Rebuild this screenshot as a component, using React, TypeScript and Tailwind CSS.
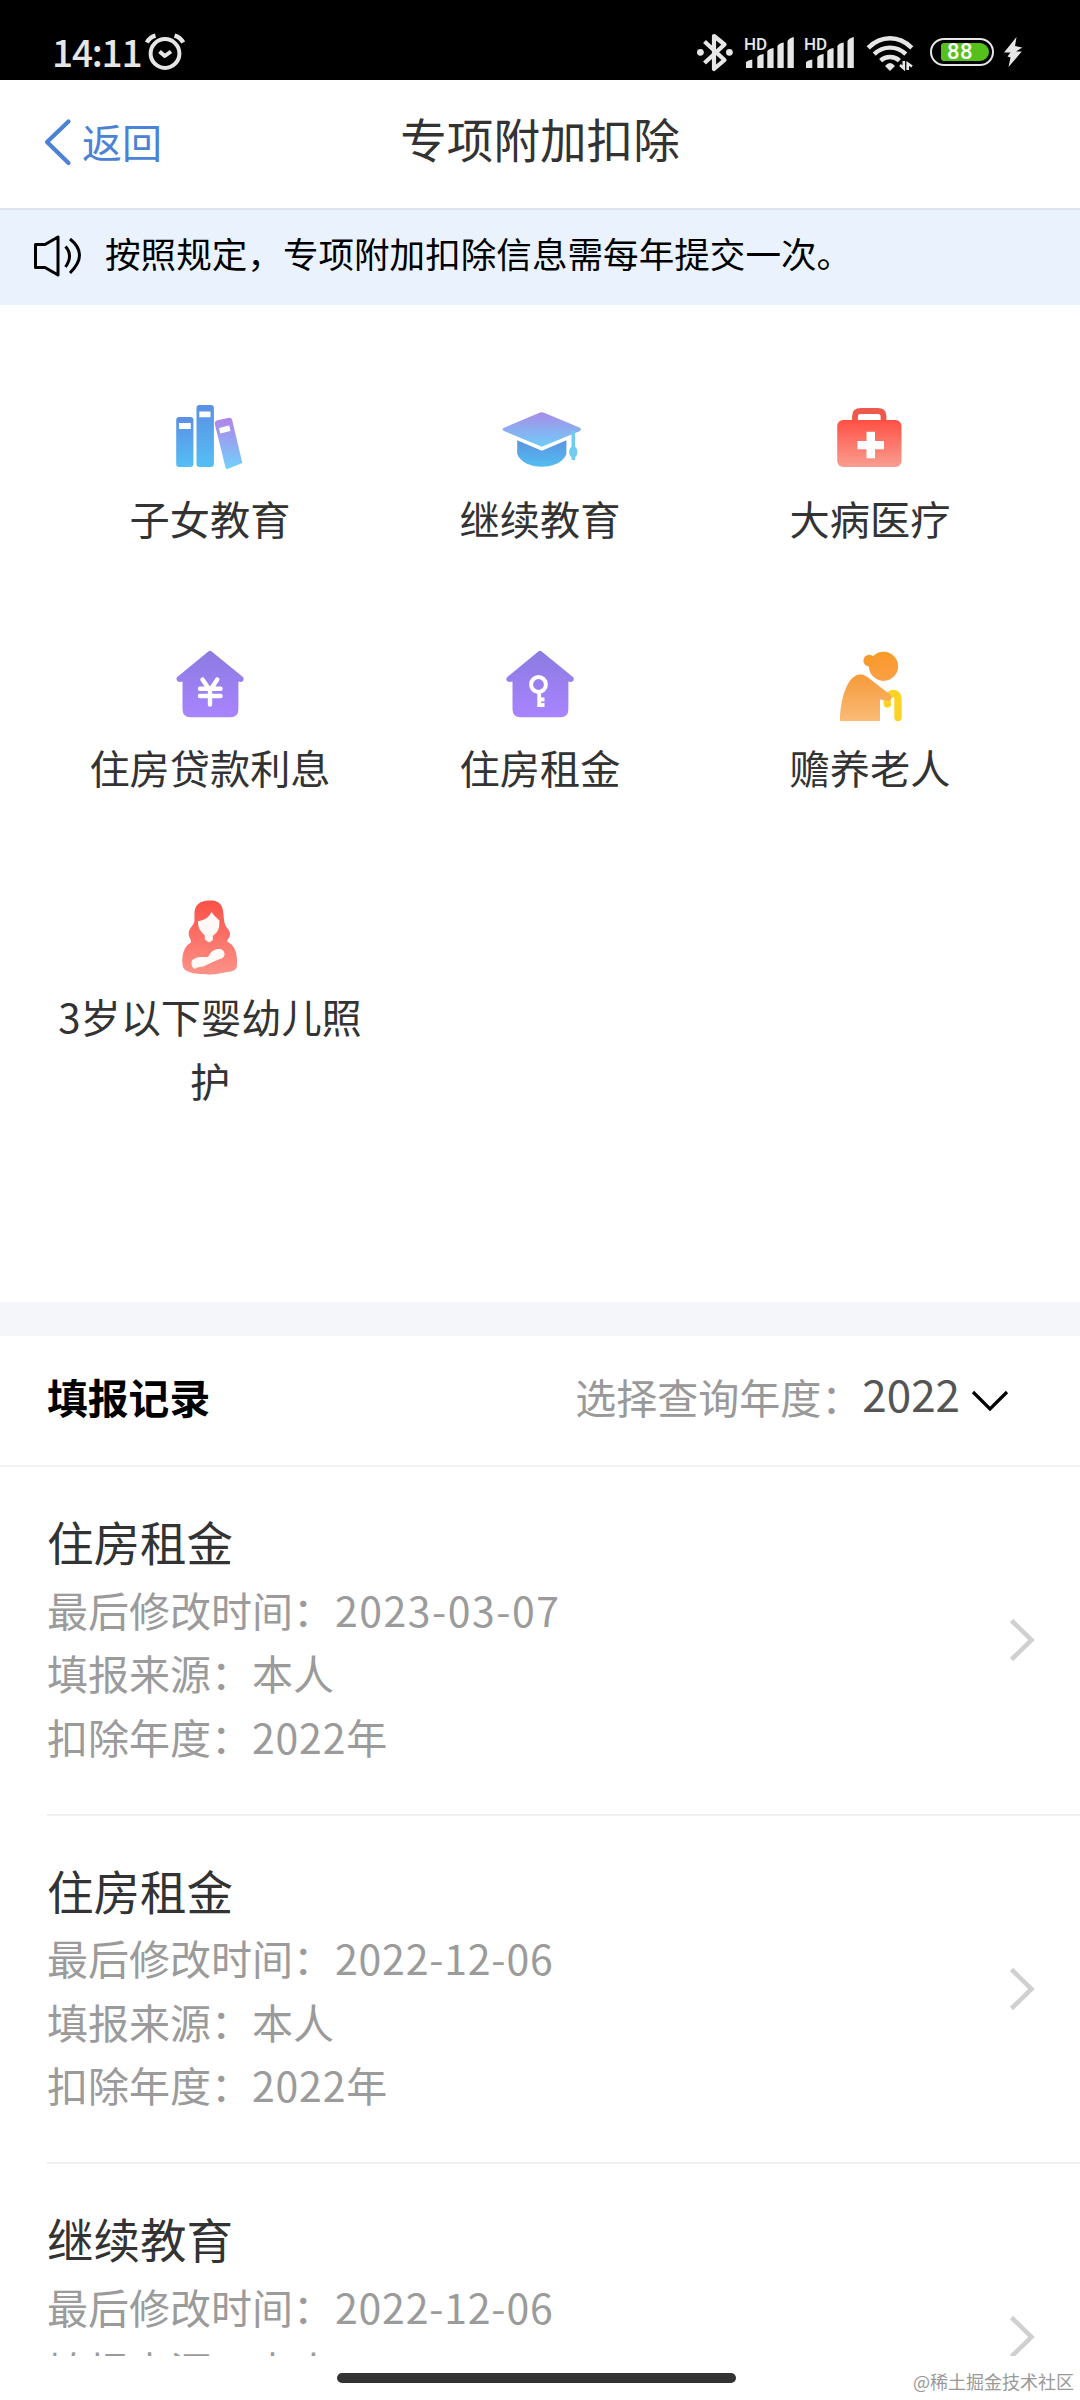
import type { ReactNode } from 'react';

const light = '#e6e6e6';

function AlarmIcon() {
  return (
    <svg className="ml-[7px] mt-[32px] h-[40px] w-[42px] shrink-0" viewBox="0 0 42 40" fill="none" stroke={light} strokeWidth="4">
      <circle cx="21" cy="21.5" r="14.4" />
      <path d="M2.8 10.5 Q6 5 11.5 3.6 M30.5 3.6 Q36 5 39.2 10.5" strokeWidth="4.4" />
      <path d="M15.5 19.5 L20.8 24 L27 19.5" strokeLinejoin="round" />
    </svg>
  );
}

function BluetoothIcon() {
  return (
    <svg className="absolute left-[696px] top-[32px] h-[40px] w-[38px]" viewBox="0 0 38 40" fill="none" stroke={light} strokeWidth="4.2">
      <path d="M8.5 9.5 L28.5 28 L18 37 V4 L28.5 12.5 L8.5 31" strokeLinejoin="round" />
      <circle cx="4.4" cy="20.3" r="3.4" fill={light} stroke="none" />
      <circle cx="33.4" cy="20.3" r="3.4" fill={light} stroke="none" />
    </svg>
  );
}

function Signal({ className }: { className: string }) {
  return (
    <div className={className}>
      <span className="absolute left-0 top-[3px] font-['Roboto'] text-[17px] font-medium leading-[18px] text-[#e6e6e6]">HD</span>
      <svg className="h-[38px] w-[52px]" viewBox="0 0 52 38" fill={light}>
        <path d="M2 36 V30 Q4 28 8.3 27.5 V36Z M13.3 36 V25 Q15 22.5 19.6 22 V36Z M23.3 36 V19 Q25 16.5 29.6 16 V36Z M33.4 36 V14 Q35 11 39.7 10.5 V36Z M43.5 36 V9 Q45 6 49.8 5 V36Z" />
      </svg>
    </div>
  );
}

function WifiIcon() {
  return (
    <svg className="absolute left-[866px] top-[35px] h-[38px] w-[48px]" viewBox="0 0 48 38" fill="none" stroke={light} strokeWidth="4.4">
      <path d="M2.2 12.8 Q12 3.3 24 3.3 T45.8 12.8" />
      <path d="M8.2 19.2 Q15 12.6 24 12.6 T39.8 19.2" />
      <path d="M14.6 25.6 Q18.5 22 24 22 T33.4 25.6" />
      <path d="M19 31 Q24 25 29 31 L24 36Z" fill={light} stroke="none" />
      <path d="M37.8 26 V33.4 L34 30 M41.7 35 V28.5 L46 31.5" strokeWidth="2.6" />
    </svg>
  );
}

function StatusBar() {
  return (
    <header className="relative flex h-[80px] shrink-0 bg-black">
      <span className="ml-[52px] mt-[27px] w-[85px] whitespace-nowrap font-['Noto_Sans_CJK_SC'] text-[37px] font-medium leading-[48px] tracking-[-1.2px] text-[#e6e6e6]">
        14:11
      </span>
      <AlarmIcon />
      <BluetoothIcon />
      <Signal className="absolute left-[744px] top-[32px]" />
      <Signal className="absolute left-[804px] top-[32px]" />
      <WifiIcon />
      <div className="absolute left-[930px] top-[38px] h-[28px] w-[64px] rounded-full border-2 border-[#e6e6e6]">
        <div className="absolute left-[9px] top-[3px] flex h-[18px] w-[48px] items-center rounded-l-[3px] rounded-r-[9px] bg-[#55c01b] pl-[6px] font-['Roboto'] text-[22px] font-medium leading-[18px] tracking-[0.6px] text-white">
          88
        </div>
      </div>
      <svg className="absolute left-[1003px] top-[36px] h-[32px] w-[20px]" viewBox="0 0 20 32" fill={light}>
        <path d="M13.5 1 L1 16.5 H7.5 L4.5 20.5 L7.5 21.5 L5.5 31 L18.8 15.5 H13 L19.3 11.5 L12 10Z" />
      </svg>
    </header>
  );
}

function TitleBar() {
  return (
    <div className="relative flex h-[130px] shrink-0 items-center justify-center border-b-2 border-[#dfe4ee]">
      <button className="absolute left-[43px] top-[35px] flex items-center text-[40px] leading-[52px] text-[#4b82d6]">
        <svg className="mt-[2px] h-[50px] w-[30px]" viewBox="0 0 30 50" fill="none" stroke="currentColor" strokeWidth="4.2" strokeLinecap="round">
          <path d="M25.5 4.5 L4 25 L25.5 46" strokeLinejoin="round" />
        </svg>
        <span className="ml-[9px]">返回</span>
      </button>
      <h1 className="-mt-[12px] text-[46.6px] leading-[60px]">专项附加扣除</h1>
    </div>
  );
}

function Notice() {
  return (
    <div className="flex h-[95px] shrink-0 items-center bg-[#eaf3fd] pl-[32px] text-black">
      <svg className="-mt-[3px] h-[44px] w-[52px]" viewBox="0 0 52 44" fill="none" stroke="#000" strokeWidth="3">
        <path d="M3.5 10.5 H13 L26 3 V41 L13 33.5 H3.5Z" strokeLinejoin="round" />
        <path d="M33.5 12.5 Q41.5 21.5 33.5 33 M38 5 Q57 20 38 39" />
      </svg>
      <p className="-mt-[9px] ml-[21px] text-[35.6px] leading-[48px]">按照规定，专项附加扣除信息需每年提交一次。</p>
    </div>
  );
}

function Gradient({ id, from, to }: { id: string; from: string; to: string }) {
  return (
    <linearGradient id={id} x1="0" y1="0" x2="0" y2="1">
      <stop offset="0" stopColor={from} />
      <stop offset="1" stopColor={to} />
    </linearGradient>
  );
}

function Books() {
  return (
    <>
      <Gradient id="book" from="#5c8fe4" to="#53bff5" />
      <Gradient id="lean" from="#b283ea" to="#70d0fa" />
      <rect x="8.2" y="21" width="17.2" height="50" rx="3" fill="url(#book)" />
      <rect x="28.5" y="9" width="17.4" height="62" rx="3" fill="url(#book)" />
      <path d="M49.5 24.3 L61 21.8 Q63.5 21.5 64.2 24 L74.3 67 L59.5 73 Q58 73 57.5 71.5 L46.8 28 Q46.6 25 49.5 24.3Z" fill="url(#lean)" />
      <path d="M11 27 H22.8 V33 H11Z M31.3 15.5 H42.5 V21.3 H31.3Z M51 32 L61.3 29.6 L62.5 35 L52.3 37.5Z" fill="#fff" />
    </>
  );
}

function Cap() {
  return (
    <>
      <Gradient id="board" from="#a88ce8" to="#6fcdf8" />
      <Gradient id="bowl" from="#5b93e0" to="#54bdf2" />
      <path d="M41.5 16.8 Q43.8 15.5 46 16.8 L81.5 31.5 Q84.5 33.3 81.5 35.2 L43.8 50.7 L6 35 Q3 33.3 6 31.7Z" fill="url(#board)" />
      <path d="M19.2 44.2 L43.8 54.8 L68.4 44.2 V58 C66 66 55 70.8 43.8 70.8 S22 66 19.2 58Z" fill="url(#bowl)" />
      <path d="M75.3 35 V64" stroke="#72ccf0" strokeWidth="3.6" />
      <ellipse cx="75.3" cy="56" rx="4.2" ry="5.8" fill="#72ccf0" />
    </>
  );
}

function Kit() {
  return (
    <>
      <Gradient id="kit" from="#ff5044" to="#f99d90" />
      <path d="M27 26 V20 Q27 15 33 15 H49.5 Q55.5 15 55.5 20 V26" fill="none" stroke="#ee594c" strokeWidth="5.8" />
      <rect x="9.2" y="24" width="64.3" height="47" rx="6" fill="url(#kit)" />
      <path d="M38.5 35.8 H47 V45 H56 V53.3 H47 V62.3 H38.5 V53.3 H29.5 V45 H38.5Z" fill="#fff" />
    </>
  );
}

function House({ id, children }: { id: string; children: ReactNode }) {
  return (
    <>
      <Gradient id={id} from="#8b7be0" to="#a984ff" />
      <path d="M40.3 6.6 Q42 5 43.7 6.6 L75.2 32.2 Q76.5 34.5 75 36 Q73.5 37.5 70.4 36.6 V64 Q70.4 72.3 62.5 72.3 H22.5 Q14.5 72.3 14.5 64 V36.6 Q11 37.5 9.2 36 Q7.5 34.5 9 32.2Z" fill={`url(#${id})`} />
      <g fill="none" stroke="#fff">{children}</g>
    </>
  );
}

function Elder() {
  return (
    <>
      <Gradient id="elder" from="#f59a3a" to="#fabb76" />
      <Gradient id="head" from="#f89a28" to="#fb9f45" />
      <path d="M59.4 59 C57 48 70 44 70 55 V72.5" fill="none" stroke="#fbd324" strokeWidth="7.4" strokeLinecap="round" />
      <path d="M12 76 C12 57 18 32 31 29.6 Q36 28.5 42 34 L62.5 50 Q65 53 61 56 L52 54.5 V76Z" fill="url(#elder)" />
      <circle cx="55.5" cy="21.3" r="14.6" fill="url(#head)" />
      <circle cx="41.3" cy="15.7" r="5.9" fill="#f79a2e" />
    </>
  );
}

function Mother() {
  return (
    <>
      <Gradient id="mother" from="#fb5047" to="#fb9389" />
      <path d="M42 6.6 C49 6.4 53 9 54.7 15 C56 22 55.5 27 57.5 31.5 C59.5 35 62.5 37 62 41 C61.5 44.5 58.5 46 59.5 48 C66 50.5 69 58 69 66 C69 73 69.5 76 63 77.5 C56 78.5 48 80.8 40.3 80.5 C33 80 25 80 20 77.5 C15 75.5 14.2 72 14.3 66 C14.5 58 17 52 22.7 48.7 C24 46 20.5 44 20.7 39.3 C21 34 25 32 26.3 27.7 C27 23 25.5 17 28 12.7 C31 8 36 6.6 42 6.6Z" fill="url(#mother)" />
      <path d="M43.5 17.5 C45 21 48.5 23.5 51.4 26.5 C51.5 32 51 36 48.5 38.5 L44.8 42 V46.2 L41 48.4 L36.8 45.5 V41.5 C32 37 30 34 30 27.3 C36 26.5 42 23 43.5 17.5Z" fill="#fffaf5" />
      <path d="M23.5 69 C23 64 31 62.5 36.5 63 C39 63.5 40.5 63 42 60 C44.5 55.5 52 53.5 55 56.5 C58 60 56.5 64 52 65 C45 67.5 40 70.5 35.5 72.5 C30 73 27.5 74 27 75 C24.5 74 23.5 72 23.5 69Z" fill="#fffaf5" />
    </>
  );
}

const categories: { label: string; icon: ReactNode }[] = [
  { label: '子女教育', icon: <Books /> },
  { label: '继续教育', icon: <Cap /> },
  { label: '大病医疗', icon: <Kit /> },
  {
    label: '住房贷款利息',
    icon: (
      <House id="loan">
        <path d="M34.5 34.5 L42 45.5 L49.3 34.5 M42 45 V59.5 M32 43.8 H52.5 M32 51 H52.5" strokeWidth="4.4" strokeLinecap="round" />
      </House>
    ),
  },
  {
    label: '住房租金',
    icon: (
      <House id="rent">
        <circle cx="40.5" cy="39.5" r="7.4" strokeWidth="4" />
        <path d="M41.2 47 V62 M41.2 54.5 H46.5 M41.2 60 H46.5" strokeWidth="3.8" />
      </House>
    ),
  },
  { label: '赡养老人', icon: <Elder /> },
  { label: '3岁以下婴幼儿照护', icon: <Mother /> },
];

const records = [
  { title: '住房租金', date: '2023-03-07', source: '本人', year: '2022' },
  { title: '住房租金', date: '2022-12-06', source: '本人', year: '2022' },
  { title: '继续教育', date: '2022-12-06', source: '本人' },
];

export default function App() {
  return (
    <div className="flex h-[2400px] w-[1080px] flex-col overflow-hidden bg-white font-['Noto_Sans_CJK_SC',sans-serif] text-[#333]">
      <StatusBar />
      <TitleBar />
      <Notice />

      <section className="grid h-[997px] shrink-0 auto-rows-[249px] grid-cols-3 px-[45px] pt-[91px]">
        {categories.map((c) => (
          <div key={c.label} className="flex flex-col items-center">
            <svg className="h-[84px] w-[84px]" viewBox="0 0 84 84">{c.icon}</svg>
            <p className="mt-[6px] w-[320px] text-center text-[40.2px] leading-[63.5px]">{c.label}</p>
          </div>
        ))}
      </section>

      <div className="h-[34px] shrink-0 bg-[#f4f6fa]" />

      <section className="flex h-[131px] shrink-0 items-center border-b-2 border-[#f3f3f3] pl-[47px] pr-[71px]">
        <h2 className="-mt-[8px] text-[40.8px] font-bold leading-[60px] text-black">填报记录</h2>
        <span className="-mt-[9px] ml-auto text-[41px] leading-[60px] text-[#999]">选择查询年度：</span>
        <span className="-mt-[16px] text-[44px] leading-[60px] text-[#555]">2022</span>
        <svg className="ml-[11px] mt-[1px] h-[24px] w-[38px]" viewBox="0 0 38 24" fill="none" stroke="#000" strokeWidth="3.2">
          <path d="M2 3 L19 20 L36 3" />
        </svg>
      </section>

      <section className="h-[889px] shrink-0 overflow-hidden">
        {records.map((r, i) => (
          <article key={i} className="ml-[47px] flex h-[348.5px] items-center justify-between border-b-2 border-[#f0f0f0] pr-[45px]">
            <div className="h-full pt-[42px]">
              <h3 className="text-[46.5px] leading-[63.5px]">{r.title}</h3>
              <div className="mt-[5px] text-[41px] leading-[63.5px] text-[#9b9b9b]">
                <p>
                  最后修改时间：
                  <span className={r.date === '2023-03-07' ? 'ml-[1px] tracking-[1.5px]' : 'ml-[1px] tracking-[0.8px]'}>{r.date}</span>
                </p>
                <p>填报来源：{r.source}</p>
                {r.year && (
                  <p>扣除年度：<span className="tracking-[0.8px]">{r.year}</span>年</p>
                )}
              </div>
            </div>
            <svg className="h-[44px] w-[26px]" viewBox="0 0 26 44" fill="none" stroke="#d0d0d0" strokeWidth="4.6">
              <path d="M2.5 2.5 L22.5 22 L2.5 41.5" />
            </svg>
          </article>
        ))}
      </section>

      <footer className="relative h-[44px] shrink-0">
        <div className="ml-[337px] mt-[17px] h-[10px] w-[399px] rounded-full bg-[#333]" />
        <span className="absolute right-[6px] top-[12px] whitespace-nowrap text-[18px] leading-[26px] text-[#999]">@稀土掘金技术社区</span>
      </footer>
    </div>
  );
}
